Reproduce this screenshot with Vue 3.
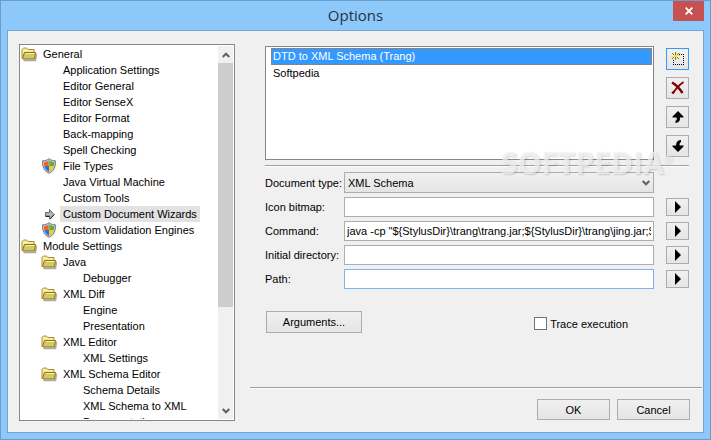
<script setup>
import { ref } from 'vue'

const tree = [
  { label: 'General', level: 0, icon: 'folder' },
  { label: 'Application Settings', level: 1 },
  { label: 'Editor General', level: 1 },
  { label: 'Editor SenseX', level: 1 },
  { label: 'Editor Format', level: 1 },
  { label: 'Back-mapping', level: 1 },
  { label: 'Spell Checking', level: 1 },
  { label: 'File Types', level: 1, icon: 'shield' },
  { label: 'Java Virtual Machine', level: 1 },
  { label: 'Custom Tools', level: 1 },
  { label: 'Custom Document Wizards', level: 1, icon: 'arrow', current: true },
  { label: 'Custom Validation Engines', level: 1, icon: 'shield' },
  { label: 'Module Settings', level: 0, icon: 'folder' },
  { label: 'Java', level: 1, icon: 'folder' },
  { label: 'Debugger', level: 2 },
  { label: 'XML Diff', level: 1, icon: 'folder' },
  { label: 'Engine', level: 2 },
  { label: 'Presentation', level: 2 },
  { label: 'XML Editor', level: 1, icon: 'folder' },
  { label: 'XML Settings', level: 2 },
  { label: 'XML Schema Editor', level: 1, icon: 'folder' },
  { label: 'Schema Details', level: 2 },
  { label: 'XML Schema to XML', level: 2 },
  { label: 'Documentation', level: 2 }
]

const wizards = ['DTD to XML Schema (Trang)', 'Softpedia']
const selected = ref(0)
const docType = ref('XML Schema')
const trace = ref(false)
const fields = ref([
  { id: 'icon', label: 'Icon bitmap:', value: '' },
  {
    id: 'command',
    label: 'Command:',
    value: 'java -cp "${StylusDir}\\trang\\trang.jar;${StylusDir}\\trang\\jing.jar;${StylusDir}\\trang"'
  },
  { id: 'directory', label: 'Initial directory:', value: '' },
  { id: 'path', label: 'Path:', value: '', active: true }
])
</script>

<template>
  <div class="window">
    <header class="titlebar">
      <h1>Options</h1>
      <button class="close" type="button" aria-label="Close">
        <svg width="8" height="8" viewBox="0 0 8 8"><path d="M.7.7l6.6 6.6M7.3.7L.7 7.3" stroke="#fff" stroke-width="1.9" /></svg>
      </button>
    </header>

    <main class="client">
      <nav class="tree">
        <ul>
          <li v-for="node in tree" :key="node.label" :class="'level' + node.level">
            <span class="icon">
              <svg v-if="node.icon === 'folder'" width="16" height="16" viewBox="0 0 16 16">
                <path d="M2.500 14.500h12l1-7" fill="none" stroke="#a9a9a9" stroke-width="1.500" />
                <path d="M1 12.500V3.500L2.500 2h3L7 3.500h6V7" fill="#f2eda6" stroke="#b08a28" />
                <path d="M1.500 12.500L3.500 6.500h11l-1 6.500H2z" fill="#cccc66" stroke="#986a08" stroke-linejoin="round" />
                <path d="M4.500 7.500h9" stroke="#f3f0b5" />
              </svg>
              <svg v-else-if="node.icon === 'shield'" width="16" height="16" viewBox="0 0 16 16">
                <path d="M8 .7C6.200 2.100 4 2.800 1.600 2.800c-.3 5.700 1.200 10.200 6.400 12.500 5.200-2.300 6.700-6.800 6.400-12.500C12 2.800 9.800 2.100 8 .7z" fill="#c4c7ca" stroke="#74787c" />
                <path d="M7.700 2.400C6.200 3.400 4.700 3.900 3 4c-.1 1.500 0 2.900.3 4.100h4.400z" fill="#f0642b" />
                <path d="M8.300 2.400C9.800 3.400 11.300 3.900 13 4c.1 1.500 0 2.900-.3 4.100H8.300z" fill="#55b82c" />
                <path d="M3.400 8.100h4.600v5.700C5.400 12.700 4 11 3.400 8.100z" fill="#2871d9" />
                <path d="M12.600 8.100H8v5.700c2.600-1.100 4-2.800 4.600-5.700z" fill="#f8c52a" />
              </svg>
              <svg v-else-if="node.icon === 'arrow'" width="16" height="16" viewBox="0 0 16 16">
                <path d="M4.500 6.500h4v-3l4.500 5-4.500 4.500v-3h-4z" fill="#b7b7b7" stroke="#666" />
                <path d="M9 13.200l4.300-4.500M4.500 10.500h4" stroke="#222" />
              </svg>
            </span>
            <a href="#" :class="{ current: node.current }">{{ node.label }}</a>
          </li>
        </ul>
        <div class="scrollbar">
          <button type="button" aria-label="Scroll up">
            <svg width="8" height="6" viewBox="0 0 8 6"><path d="M.7 5L4 1.700 7.300 5" fill="none" stroke="#606060" stroke-width="2" /></svg>
          </button>
          <div class="track"><div class="thumb"></div></div>
          <button type="button" aria-label="Scroll down">
            <svg width="8" height="6" viewBox="0 0 8 6"><path d="M.7 1L4 4.300 7.300 1" fill="none" stroke="#606060" stroke-width="2" /></svg>
          </button>
        </div>
      </nav>

      <section class="panel">
        <div class="settings">
          <div class="wizards">
            <ul class="listbox" role="listbox" aria-label="Wizards">
              <li
                v-for="(name, i) in wizards"
                :key="name"
                role="option"
                :aria-selected="selected === i"
                :class="{ selected: selected === i }"
                @click="selected = i"
              >{{ name }}</li>
            </ul>
            <div class="tools">
              <button class="tool primary" type="button" aria-label="New">
                <svg width="14" height="14" viewBox="0 0 14 14" shape-rendering="crispEdges">
                  <path d="M8 2h1v1H8zM10 2h1v1h-1zM12 2h1v1h-1zM12 4h1v1h-1zM12 6h1v1h-1zM12 8h1v1h-1zM12 10h1v1h-1zM12 12h1v1h-1zM10 12h1v1h-1zM8 12h1v1H8zM6 12h1v1H6zM4 12h1v1H4zM2 12h1v1H2zM2 10h1v1H2zM2 8h1v1H2z" />
                  <path d="M4 0h1v3H4zM4 5h1v3H4zM1 1h1v1h1v1H2V2H1zM7 1h1v1H7v1H6V2h1zM2 5h1v1H2v1H1V6h1zM6 5h1v1h1v1H7V6H6z" fill="#77774a" />
                  <path d="M3 3h3v2H3zM0 4h2v1H0zM7 3h2v1H7zM8 0h1v1H8zM5 1h1v1H5zM5 6h1v1H5z" fill="#f4ec00" />
                </svg>
              </button>
              <button class="tool" type="button" aria-label="Delete">
                <svg width="14" height="14" viewBox="0 0 14 14">
                  <path d="M1 1.500c3.200 1.700 7.500 6 10.500 10.500" fill="none" stroke="#800000" stroke-width="2.500" />
                  <path d="M12.500 1C8.500 3.800 4.500 8 2 12.500" fill="none" stroke="#800000" stroke-width="1.700" />
                  <path d="M1 12.300l2.300-2" stroke="#800000" stroke-width="2" />
                </svg>
              </button>
              <button class="tool" type="button" aria-label="Move up">
                <svg width="14" height="14" viewBox="0 0 14 14"><path d="M7 1l5.500 5.500V7.500H9c.2 3-.8 5-4.500 5.500v-2C6 10.200 6 9 5.500 7.500H1.500v-1z" /></svg>
              </button>
              <button class="tool" type="button" aria-label="Move down">
                <svg width="14" height="14" viewBox="0 0 14 14"><path d="M7 13l5.500-5.500V6.500H8.700C8.300 5 8.700 3.500 10 3V1C6.300 1.300 5 3.500 5.200 6.500H1.500v1z" /></svg>
              </button>
            </div>
          </div>

          <hr />

          <form class="fields" @submit.prevent>
            <label for="doctype">Document type:</label>
            <div class="dropdown">
              <select id="doctype" v-model="docType"><option>XML Schema</option></select>
              <svg width="8" height="6" viewBox="0 0 8 6"><path d="M.7 1L4 4.300 7.300 1" fill="none" stroke="#606060" stroke-width="2" /></svg>
            </div>
            <span></span>
            <template v-for="field in fields" :key="field.id">
              <label :for="field.id">{{ field.label }}</label>
              <input :id="field.id" v-model="field.value" type="text" :class="{ active: field.active }" />
              <button class="more" type="button" :aria-label="'Insert into ' + field.label">
                <svg width="6" height="12" viewBox="0 0 6 12"><path d="M0 0l6 6-6 6z" /></svg>
              </button>
            </template>
          </form>

          <div class="actions">
            <button class="push" type="button">Arguments...</button>
            <label class="check"><input v-model="trace" type="checkbox" />Trace execution</label>
          </div>
          <div class="watermark" aria-hidden="true">SOFTPEDIA<sup>®</sup></div>
        </div>

        <footer>
          <button class="push" type="button">OK</button>
          <button class="push" type="button">Cancel</button>
        </footer>
      </section>
    </main>
  </div>
</template>

<style>
body {
  margin: 0;
}
</style>

<style scoped>
* {
  box-sizing: border-box;
}
.window {
  display: flex;
  flex-direction: column;
  height: 100vh;
  padding: 0 6px 6px;
  border: 1px solid #6c9cc8;
  background: #8dc8fb;
  color: #000;
  font: 11px/16px "Liberation Sans", Arial, sans-serif;
}
.titlebar {
  display: grid;
  grid-template-columns: 1fr 31px;
  height: 29px;
  flex: none;
}
h1 {
  margin: 0;
  padding-left: 31px;
  text-align: center;
  color: #27323c;
  font: 15px/29px "Open Sans", sans-serif;
}
button {
  display: flex;
  align-items: center;
  justify-content: center;
  padding: 0;
  border: 1px solid #acacac;
  background: linear-gradient(#f0f0f0, #e5e5e5);
  color: #000;
  font: inherit;
}
svg {
  display: block;
  flex: none;
}
.close {
  height: 20px;
  border: 0;
  background: #c75050;
}
.client {
  display: grid;
  grid-template-columns: 216px 1fr;
  grid-template-rows: minmax(0, 1fr);
  gap: 15px;
  flex: 1;
  min-height: 0;
  padding: 13px 1px 11px 11px;
  border: 1px solid #74a4d0;
  background: #f0f0f0;
}
ul {
  margin: 0;
  padding: 0;
  list-style: none;
}
.tree {
  display: flex;
  padding: 1px;
  border: 1px solid #828790;
  background: #fff;
}
.tree ul {
  flex: 1;
  overflow: hidden;
}
.tree li {
  display: flex;
  height: 16px;
}
.tree .level1 {
  padding-left: 20px;
}
.tree .level2 {
  padding-left: 40px;
}
.icon {
  width: 19px;
  flex: none;
}
.tree a {
  padding: 0 3px;
  color: #000;
  text-decoration: none;
  white-space: nowrap;
}
.tree .current {
  background: #e2e2e2;
}
.scrollbar {
  display: flex;
  flex-direction: column;
  width: 15px;
}
.scrollbar button {
  height: 17px;
  border: 0;
  background: #f0f0f0;
}
.track {
  flex: 1;
  background: #f0f0f0;
}
.thumb {
  height: 72%;
  background: #cdcdcd;
}
.panel {
  display: flex;
  flex-direction: column;
  min-width: 0;
}
.settings {
  position: relative;
  flex: 1;
  padding: 2px 13px 0 15px;
}
.wizards {
  display: grid;
  grid-template-columns: 1fr 23px;
  gap: 12px;
}
.listbox {
  height: 114px;
  padding: 1px 1px 1px 5px;
  border: 1px solid #828790;
  background: #fff;
}
.listbox li {
  height: 17px;
  padding: 0 1px;
  border: 1px solid transparent;
  line-height: 15px;
}
/* Focus rectangle: alternating single pixels round the selected row */
.listbox li.selected {
  background:
    linear-gradient(#3399ff, #3399ff) padding-box,
    repeating-conic-gradient(#e06c00 0 25%, #3399ff 0 50%) 0 0 / 2px 2px border-box;
  color: #fff;
}
.tools {
  display: flex;
  flex-direction: column;
  gap: 7px;
  padding-top: 2px;
}
.tool {
  height: 22px;
}
.tool.primary {
  border-color: #3399ff;
}
hr {
  height: 2px;
  margin: 5px 0;
  border: 0;
  border-top: 1px solid #a0a0a0;
  background: #fff;
}
.fields {
  display: grid;
  grid-template-columns: 67px 1fr 23px;
  align-items: center;
  gap: 4px 12px;
}
.fields label {
  white-space: nowrap;
}
.fields input,
select {
  width: 100%;
  height: 20px;
  padding: 0 2px;
  border: 1px solid #abadb3;
  border-radius: 0;
  background: #fff;
  color: #000;
  font: inherit;
}
.fields input.active {
  border-color: #7eb4ea;
}
.dropdown {
  display: grid;
  align-items: center;
}
.dropdown > * {
  grid-area: 1 / 1;
}
.dropdown svg {
  justify-self: end;
  margin-right: 4px;
  pointer-events: none;
}
select {
  height: 21px;
  padding: 0 3px;
  appearance: none;
  border-color: #acacac;
  background: linear-gradient(#f0f0f0, #e5e5e5);
}
.more {
  height: 18px;
}
.actions {
  display: flex;
  align-items: center;
  justify-content: space-between;
  margin-top: 22px;
  padding: 0 61px 0 1px;
}
.push {
  width: 73px;
  height: 21px;
}
.actions .push {
  width: 96px;
  height: 22px;
}
.check {
  display: flex;
  align-items: center;
  gap: 3px;
  padding-top: 3px;
}
.check input {
  width: 13px;
  height: 13px;
  margin: 0;
  appearance: none;
  border: 1px solid #707070;
  background: #fff;
}
.check input:checked {
  background: #3399ff;
}
.watermark {
  position: absolute;
  top: 104px;
  right: 30px;
  color: rgba(244, 244, 244, 0.75);
  font: bold 30px/30px "Open Sans", sans-serif;
  text-shadow: 1px 1px 2px rgba(0, 0, 0, 0.16);
  pointer-events: none;
}
.watermark sup {
  font-size: 10px;
  line-height: 0;
}
footer {
  display: flex;
  justify-content: flex-end;
  gap: 7px;
  padding: 11px 12px 1px 0;
  border-top: 1px solid #a0a0a0;
  box-shadow: inset 0 1px #fff;
}
</style>
